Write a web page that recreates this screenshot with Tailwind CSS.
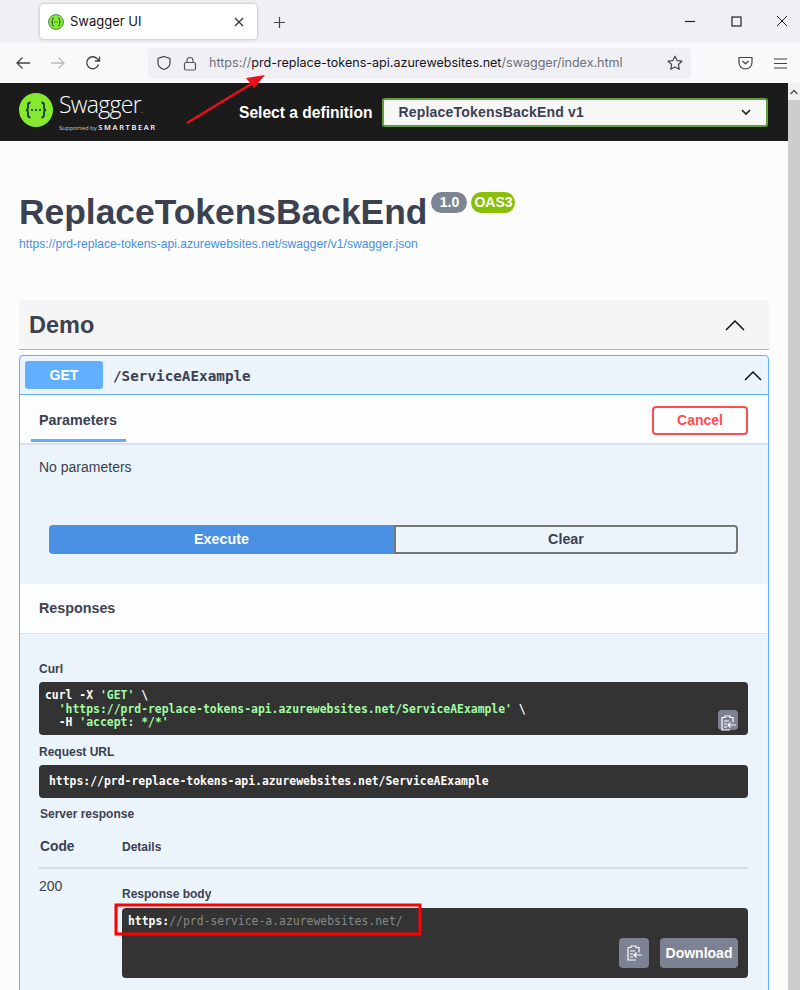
<!DOCTYPE html>
<html lang="en">
<head>
    <meta charset="UTF-8">
    <title>Swagger UI</title>
    <script src="https://cdn.jsdelivr.net/npm/@tailwindcss/browser@4"></script>
</head>
<body class="relative w-[800px] h-[990px] overflow-hidden bg-white font-['Liberation_Sans',sans-serif]">
    <!-- Tab strip -->
    <div class="h-[43px] bg-[#f0f0f4] flex items-start pl-10 relative">
        <div class="mt-1 w-[217px] h-[35px] bg-white rounded shadow-[0_0_3px_rgba(0,0,0,0.3)] flex items-center pl-2">
            <svg class="w-4 h-4" viewBox="0 0 16 16"><circle cx="8" cy="8" r="7.500" fill="#85ea2d" stroke="#173646" stroke-width="0.600"/><path d="M5.800 4q-1.300 0-1.300 1.300v1.400q0 1.100-1 1.300 1 .2 1 1.300v1.400q0 1.300 1.300 1.300M10.200 4q1.300 0 1.300 1.300v1.400q0 1.100 1 1.300-1 .2-1 1.300v1.400q0 1.300-1.300 1.300" fill="none" stroke="#173646" stroke-width="0.900"/><path d="M6.300 8h.8M7.600 8h.8M8.900 8h.8" stroke="#173646" stroke-width="0.800"/></svg>
            <span class="ml-[6px] text-[13px] text-[#15141a] font-['Inter',sans-serif]">Swagger UI</span>
            <svg class="ml-auto mr-3 w-3 h-3" viewBox="0 0 12 12"><path d="M2 2l8 8M10 2l-8 8" stroke="#333" stroke-width="1.300"/></svg>
        </div>
        <svg class="ml-[16px] mt-[16px] w-[13px] h-[13px]" viewBox="0 0 13 13"><path d="M6.500 1v11M1 6.500h11" stroke="#444" stroke-width="1.200"/></svg>
        <div class="ml-auto flex items-center mt-[15px]">
            <svg class="w-[11px] h-[11px]" viewBox="0 0 11 11"><path d="M0 5.500h10" stroke="#222" stroke-width="1.200"/></svg>
            <svg class="ml-[35px] w-[11px] h-[11px]" viewBox="0 0 11 11"><rect x="1" y="1" width="9" height="9" fill="none" stroke="#222" stroke-width="1.200"/></svg>
            <svg class="ml-[34px] mr-[12px] w-[12px] h-[12px]" viewBox="0 0 12 12"><path d="M1 1l10 10M11 1L1 11" stroke="#222" stroke-width="1"/></svg>
        </div>
    </div>

    <!-- Toolbar -->
    <div class="h-10 bg-[#f9f9fb] flex items-center pl-[15px]">
        <svg class="w-4 h-4" viewBox="0 0 16 16"><path d="M15 8H2M7.500 2.500L2 8l5.500 5.500" fill="none" stroke="#444" stroke-width="1.300"/></svg>
        <svg class="ml-[19px] w-4 h-4" viewBox="0 0 16 16"><path d="M1 8h13M8.500 2.500L14 8l-5.500 5.500" fill="none" stroke="#bbb" stroke-width="1.300"/></svg>
        <svg class="ml-[19px] w-4 h-4" viewBox="0 0 16 16"><path d="M13.500 9.500A6 6 0 1 1 12 3.500L14.500 6M14.500 1.500V6H10" fill="none" stroke="#444" stroke-width="1.300"/></svg>
        <div class="ml-[47px] w-[543px] h-[31px] bg-[#f0f0f4] rounded flex items-center pl-2 font-['Inter',sans-serif] text-[12.560px]">
            <svg class="w-4 h-4" viewBox="0 0 16 16"><path d="M8 1.500l6 2v4.500q0 4.500-6 6.500-6-2-6-6.500V3.500z" fill="none" stroke="#444" stroke-width="1.200"/></svg>
            <svg class="ml-[11px] w-[14px] h-[15px]" viewBox="0 0 14 15"><path d="M4 6.500V4.500a3 3 0 0 1 6 0v2" fill="none" stroke="#555" stroke-width="1.200"/><rect x="1.500" y="6.500" width="11" height="7.500" rx="1.500" fill="none" stroke="#555" stroke-width="1.200"/></svg>
            <span class="ml-[12px] text-[#6f6f76]">https://</span><span class="text-[#15141a]">prd-replace-tokens-api.azurewebsites.net</span><span class="text-[#6f6f76]">/swagger/index.html</span>
            <svg class="ml-auto mr-2 w-4 h-4" viewBox="0 0 16 16"><path d="M8 1.200l2.100 4.400 4.800.6-3.500 3.300.9 4.800L8 12l-4.300 2.300.9-4.800L1.100 6.200l4.800-.6z" fill="none" stroke="#444" stroke-width="1.200" stroke-linejoin="round"/></svg>
        </div>
        <svg class="ml-[47px] w-[15px] h-[14px]" viewBox="0 0 15 14"><path d="M1 1.500h13v5a6.500 6.500 0 0 1-13 0zM4.500 5l3 2.800 3-2.800" fill="none" stroke="#444" stroke-width="1.200" stroke-linejoin="round"/></svg>
        <svg class="ml-[21px] w-[13px] h-[11px]" viewBox="0 0 13 11"><path d="M0 1h13M0 5.500h13M0 10h13" stroke="#444" stroke-width="1.200"/></svg>
    </div>

    <div class="flex h-[907px]">
        <!-- Page -->
        <div class="w-[788px] bg-[#fcfcfc] overflow-hidden">
            <!-- Swagger top bar -->
            <div class="h-[58px] bg-[#1b1b1b] flex items-center pl-[19px]">
                <svg class="w-[34px] h-[34px] shrink-0 -mt-[4px]" viewBox="0 0 34 34"><circle cx="17" cy="17" r="17" fill="#85ea2d"/><path d="M11.500 9.500q-2.500 0-2.500 2.500v2.500q0 2.300-2 2.500 2 .2 2 2.500V22q0 2.500 2.500 2.500M22.500 9.500q2.500 0 2.500 2.500v2.500q0 2.300 2 2.500-2 .2-2 2.500V22q0 2.500-2.500 2.500" fill="none" stroke="#173646" stroke-width="1.800"/><circle cx="13" cy="17" r="1.100" fill="#173646"/><circle cx="17" cy="17" r="1.100" fill="#173646"/><circle cx="21" cy="17" r="1.100" fill="#173646"/></svg>
                <div class="ml-[6px] w-[100px] text-white font-['Open_Sans',sans-serif]">
                    <div class="text-[23px] leading-[26px] tracking-[-0.7px] font-light">Swagger<span class="text-[8px]">.</span></div>
                    <div class="text-[6px] leading-[9px] text-[#ccc] whitespace-nowrap">Supported by <span class="text-[7.500px] tracking-[1.600px] font-semibold text-white">SMARTBEAR</span></div>
                </div>
                <span class="ml-[80px] mt-[2px] text-white font-bold text-[15.600px] whitespace-nowrap">Select a definition</span>
                <div class="ml-[10px] w-[386px] h-[29px] bg-[#f7f7f7] border-2 border-[#62a03f] rounded-[3px] flex items-center pl-[14px] pr-[15px] pt-[1px] font-bold text-[14px] tracking-[0.200px] text-[#3b4151] whitespace-nowrap">
                    ReplaceTokensBackEnd v1
                    <svg class="ml-auto w-[10px] h-[7px]" viewBox="0 0 10 7"><path d="M1 1l4 4 4-4" fill="none" stroke="#222" stroke-width="1.600"/></svg>
                </div>
            </div>

            <div class="pl-[19px] pr-[19px]">
                <!-- Title -->
                <div class="mt-[48px] flex items-start">
                    <h1 class="text-[35.400px] leading-[46px] font-bold text-[#3b4151]">ReplaceTokensBackEnd</h1>
                    <span class="ml-[4px] mt-[3px] w-[36px] h-[21px] rounded-full bg-[#7d8492] text-white text-[14px] font-bold flex items-center justify-center">1.0</span>
                    <span class="ml-[4px] mt-[3px] w-[44px] h-[21px] rounded-full bg-[#89bf04] text-white text-[14px] font-bold flex items-center justify-center">OAS3</span>
                </div>
                <div class="text-[12.150px] leading-[14px] mt-[2px] text-[#4990e2]">https://prd-replace-tokens-api.azurewebsites.net/swagger/v1/swagger.json</div>

                <!-- Demo section -->
                <div class="mt-[49px] h-[50px] bg-[#f5f5f5] border-b border-[#b5b5b5] flex items-center pl-[10px] pr-[24px]">
                    <span class="mt-[2px] text-[23.500px] font-bold text-[#3b4151]">Demo</span>
                    <svg class="ml-auto w-[20px] h-[12px]" viewBox="0 0 20 12"><path d="M1 11l9-9 9 9" fill="none" stroke="#111" stroke-width="1.500"/></svg>
                </div>

                <!-- Operation block -->
                <div class="mt-[5px] h-[700px] border border-[#61affe] rounded-[4px] bg-[#ebf3fb]">
                    <div class="h-[38px] flex items-center pl-[5px] pr-[6px]">
                        <span class="w-[78px] h-[28px] bg-[#61affe] rounded-[3px] text-white text-[14px] font-bold flex items-center justify-center">GET</span>
                        <span class="ml-[10px] mt-[3px] font-['DejaVu_Sans_Mono',monospace] font-bold text-[14.300px] text-[#3b4151]">/ServiceAExample</span>
                        <svg class="ml-auto w-[18px] h-[11px]" viewBox="0 0 18 11"><path d="M1 10l8-8 8 8" fill="none" stroke="#111" stroke-width="1.500"/></svg>
                    </div>
                    <!-- Parameters header -->
                    <div class="h-[51px] border-t border-[#61affe] border-b-2 border-b-[#d8e2ec] bg-[#fcfdff] flex items-start pl-[11px] pr-[20px]">
                        <div class="w-[95px] h-[47px] border-b-[3px] border-[#61affe] pl-[8px] pt-[17px] text-[14.300px] leading-[16px] font-bold text-[#3b4151]">Parameters</div>
                        <div class="ml-auto mt-[11px] w-[96px] h-[29px] border-2 border-[#ff4c4f] rounded-[4px] text-[#ff4c4f] text-[14px] font-bold flex items-center justify-center">Cancel</div>
                    </div>
                    <div class="pl-[19px] mt-[14px] text-[14px] leading-[16px] text-[#3b4151]">No parameters</div>
                    <!-- Execute / Clear -->
                    <div class="mt-[50px] ml-[29px] mr-[30px] h-[29px] flex text-[14.300px] font-bold">
                        <div class="w-[345px] bg-[#4990e2] rounded-l-[4px] text-white flex items-center justify-center">Execute</div>
                        <div class="flex-1 border-2 border-[#777] rounded-r-[4px] bg-[#ebf3fb] text-[#3b4151] flex items-center justify-center">Clear</div>
                    </div>
                    <!-- Responses header -->
                    <div class="mt-[30px] h-[50px] bg-[#fcfdff] border-b border-[#d8e2ec] pl-[19px] flex items-center text-[14.300px] font-bold text-[#3b4151]">Responses</div>

                    <div class="pl-[19px] pr-[20px]">
                        <div class="mt-[28px] text-[12px] leading-[14px] font-bold text-[#3b4151]">Curl</div>
                        <div class="relative mt-[6px] h-[53px] bg-[#333] rounded-[4px] px-[6px] pt-[7px] font-['DejaVu_Sans_Mono',monospace] font-bold text-[11.420px] leading-[13.500px] text-white">
                            <div class="whitespace-pre">curl -X <span class="text-[#a2fca2]">'GET'</span> \</div>
                            <div class="whitespace-pre">  <span class="text-[#a2fca2]">'https://prd-replace-tokens-api.azurewebsites.net/ServiceAExample'</span> \</div>
                            <div class="whitespace-pre">  -H <span class="text-[#a2fca2]">'accept: */*'</span></div>
                            <div class="absolute right-[10px] bottom-[5px] w-5 h-5 rounded-[4px] bg-[#7d8293] flex items-center justify-center">
                                <svg class="w-[16px] h-[18px] mt-[5px]" viewBox="0 0 16 18"><path d="M2 3.500h3V2h5v1.500h3v5M2 3.500V16h8" fill="none" stroke="#fff" stroke-width="1.200"/><path d="M4 7h5M4 10h3M4 13h3M16 11H8M10.500 8.500L8 11l2.500 2.500" fill="none" stroke="#fff" stroke-width="1.200"/></svg>
                            </div>
                        </div>
                        <div class="mt-[10px] text-[12px] leading-[14px] font-bold text-[#3b4151]">Request URL</div>
                        <div class="mt-[6px] h-[33px] bg-[#333] rounded-[4px] pl-[10px] flex items-center font-['DejaVu_Sans_Mono',monospace] font-bold text-[11.420px] text-white">https://prd-replace-tokens-api.azurewebsites.net/ServiceAExample</div>
                        <div class="mt-[9px] pl-[1px] text-[12px] leading-[14px] font-bold text-[#3b4151]">Server response</div>

                        <!-- Response table -->
                        <div class="mt-[15px] h-[33px] pl-[1px] pb-[9px] border-b-2 border-[#d5dbe2] flex items-center text-[#3b4151]">
                            <span class="w-[82px] text-[13.800px] font-bold">Code</span>
                            <span class="text-[12px] font-bold">Details</span>
                        </div>
                        <div class="flex">
                            <div class="w-[83px] mt-[9px] text-[14px] leading-[16px] text-[#3b4151]">200</div>
                            <div class="flex-1">
                                <div class="mt-[18px] text-[12px] leading-[14px] font-bold text-[#3b4151]">Response body</div>
                                <div class="relative mt-[7px] h-[70px] bg-[#333] rounded-[4px] px-[6px] pt-[6px] font-['DejaVu_Sans_Mono',monospace] text-[11.420px] leading-[14px] text-[#888]">
                                    <span class="text-white font-bold">https:</span>//prd-service-a.azurewebsites.net/
                                    <div class="absolute right-[10px] bottom-[10px] flex gap-[11px]">
                                        <div class="w-[30px] h-[30px] rounded-[4px] bg-[#7d8293] flex items-center justify-center">
                                            <svg class="w-[16px] h-[18px]" viewBox="0 0 16 18"><path d="M2 3.500h3V2h5v1.500h3v5M2 3.500V16h8" fill="none" stroke="#fff" stroke-width="1.200"/><path d="M4 7h5M4 10h3M4 13h3M16 11H8M10.500 8.500L8 11l2.500 2.500" fill="none" stroke="#fff" stroke-width="1.200"/></svg>
                                        </div>
                                        <div class="w-[78px] h-[30px] rounded-[4px] bg-[#7d8293] text-white font-['Liberation_Sans',sans-serif] text-[14px] font-bold flex items-center justify-center">Download</div>
                                    </div>
                                </div>
                            </div>
                        </div>
                    </div>
                </div>
            </div>
        </div>

        <!-- Scrollbar -->
        <div class="w-3 bg-[#f0f0f0] flex flex-col">
            <svg class="mt-[5px] w-3 h-[8px]" viewBox="0 0 12 8"><path d="M2.500 6l3.500-3.500L9.500 6" fill="none" stroke="#555" stroke-width="1.500"/></svg>
            <div class="mt-[4px] flex-1 bg-[#cdcdcd]"></div>
        </div>
    </div>

    <!-- Red annotations drawn over the screenshot -->
    <svg class="absolute left-0 top-0 w-[800px] h-[990px] pointer-events-none" viewBox="0 0 800 990">
        <path d="M187 123L256 81" stroke="#e8101a" stroke-width="2.500"/>
        <path d="M265 75L246 78L254 88z" fill="#e8101a"/>
        <rect x="116" y="905" width="304" height="29" fill="none" stroke="#f00" stroke-width="3"/>
    </svg>
</body>
</html>
